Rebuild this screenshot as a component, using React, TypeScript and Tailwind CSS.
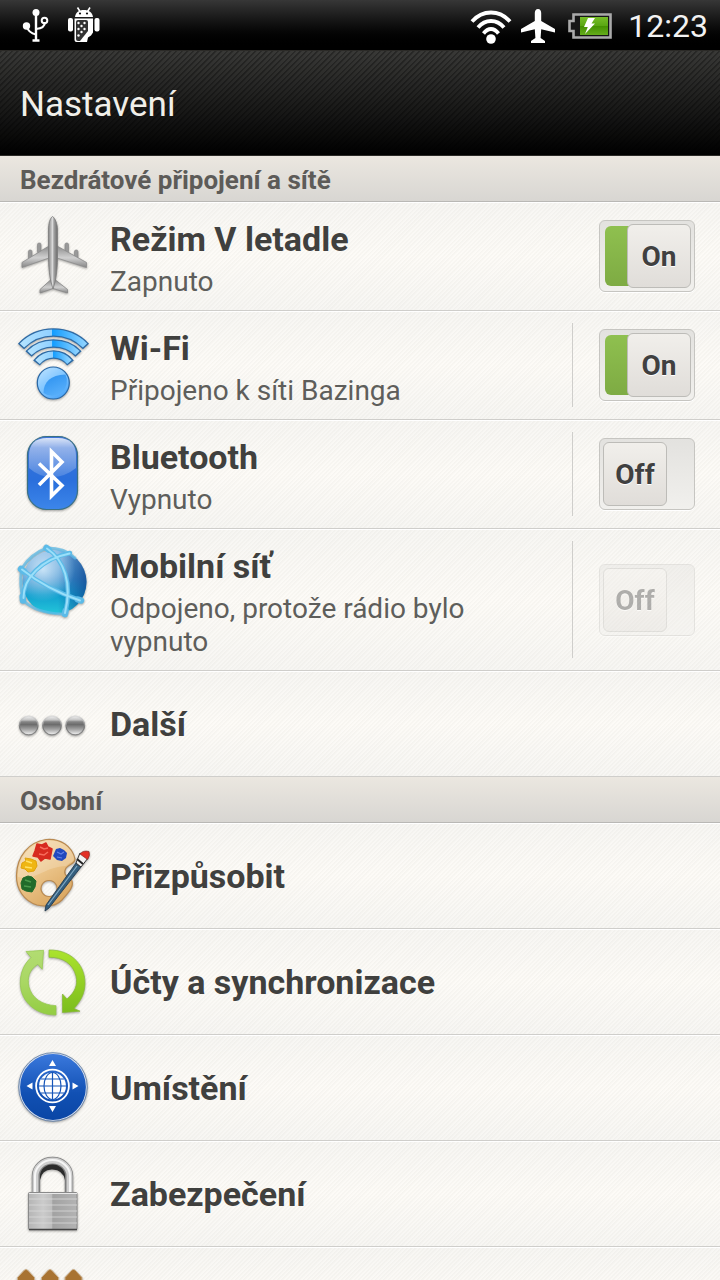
import { useState } from 'react';
import type { ReactNode } from 'react';
import { clsx } from 'clsx';

/* ---------- status bar icons ---------- */

function UsbIcon() {
  return (
    <svg viewBox="0 0 28 34" className="h-[34px] w-7" fill="none" stroke="#fff" strokeWidth="2">
      <path d="M14 5v27M10.500 32.500h7" strokeWidth="2.400" />
      <path d="M5 19c1 4 5 6.500 9 7.500M14 21c6-.5 9-2.500 9-7" />
      <circle cx="14" cy="4.500" r="3.500" fill="#fff" stroke="none" />
      <circle cx="4.500" cy="18" r="3.700" fill="#fff" stroke="none" />
      <circle cx="22.500" cy="12.500" r="2.800" />
    </svg>
  );
}

function AndroidIcon() {
  return (
    <svg viewBox="0 0 32 36" className="h-9 w-8">
      <path d="M7 10C7.500 5.500 11 3 15.800 3S24.500 5.500 25 10z" fill="#fff" />
      <path d="M9.500 .5l2.500 4M22 .5l-2.500 4" stroke="#fff" strokeWidth="1.600" />
      <circle cx="12" cy="6.500" r="1.100" fill="#111" />
      <circle cx="19" cy="6.500" r="1.100" fill="#111" />
      <rect x="0" y="11" width="5" height="13.500" rx="2" fill="#fff" />
      <rect x="26.500" y="11" width="5" height="13.500" rx="2" fill="#fff" />
      <path d="M6.500 11.500H25v14l-2 3-3 2-1 4.500H8.500a2 2 0 0 1-2-2z" fill="#fff" />
      <path d="M8 15q0-2 2-2h8q2 0 2 2v9l-8 10H10q-2 0-2-2z" fill="#333" />
      <g fill="#fff">
        <circle cx="10.500" cy="16" r="1.200" /><circle cx="16.500" cy="16" r="1.200" />
        <circle cx="13.500" cy="19" r="1.200" /><circle cx="10.500" cy="22" r="1.200" />
        <circle cx="16.500" cy="22" r="1.200" /><circle cx="13.500" cy="25" r="1.200" />
        <circle cx="10.500" cy="28.500" r="1.200" />
      </g>
    </svg>
  );
}

function SignalIcon() {
  return (
    <svg viewBox="0 0 42 36" className="h-9 w-[42px]" fill="none" stroke="#fff" strokeWidth="3.800">
      <path d="M2 13.500Q10 4.500 21 4.500T40 13.500" />
      <path d="M8 19.500Q13.500 13 21 13T34 19.500" />
      <path d="M13.500 25.500Q17 21 21 21t7.500 4.500" />
      <circle cx="21" cy="31" r="4.800" fill="#fff" stroke="none" />
    </svg>
  );
}

function FlightIcon() {
  return (
    <svg viewBox="0 0 36 34" className="h-[34px] w-9" fill="#fff">
      <path d="M18 0c2.200 0 3.200 1.800 3.200 4v8L35 20v3.500l-13.800-3.200-.6 8.700 4.400 3v2H11v-2l4.400-3-.6-8.700L1 23.500V20l13.800-8V4c0-2.200 1-4 3.200-4z" />
    </svg>
  );
}

function BatteryIcon() {
  return (
    <svg viewBox="0 0 44 28" className="h-7 w-11">
      <defs>
        <linearGradient id="batt" x2="0" y2="1">
          <stop offset="0" stopColor="#76bd27" /><stop offset=".5" stopColor="#59a612" />
          <stop offset=".5" stopColor="#439000" /><stop offset="1" stopColor="#65ad1b" />
        </linearGradient>
      </defs>
      <path d="M5.500 2.500h37v23h-37v-6.500h-4v-10h4z" fill="#161616" stroke="#aaa" strokeWidth="2.600" />
      <rect x="12" y="5" width="28" height="18" fill="url(#batt)" />
      <path d="M20 6h7l-3.500 5.500H27L17 22l2.800-7H16z" fill="#fff" />
    </svg>
  );
}

/* ---------- list icons, all on an 80x80 grid ---------- */

function Icon({ children }: { children: ReactNode }) {
  return (
    <svg viewBox="0 0 80 80" className="h-20 w-20 shrink-0 drop-shadow-[0_1px_1px_rgba(0,0,0,0.35)]" aria-hidden="true">
      {children}
    </svg>
  );
}

function AirplaneIcon() {
  return (
    <Icon>
      <defs>
        <linearGradient id="wing" x2="0" y2="1">
          <stop offset="0" stopColor="#8b8b8b" /><stop offset=".55" stopColor="#d0d0d0" /><stop offset="1" stopColor="#858585" />
        </linearGradient>
        <linearGradient id="body">
          <stop offset="0" stopColor="#858585" /><stop offset=".45" stopColor="#dadada" />
          <stop offset=".6" stopColor="#a3a3a3" /><stop offset="1" stopColor="#6b6b6b" />
        </linearGradient>
      </defs>
      <g fill="#999" stroke="#858585" strokeWidth=".6">
        <rect x="16.500" y="34" width="3.500" height="10" rx="1.500" /><rect x="25.500" y="27" width="3.500" height="10" rx="1.500" />
        <rect x="53" y="27" width="3.500" height="10" rx="1.500" /><rect x="62.500" y="34" width="3.500" height="10" rx="1.500" />
      </g>
      <path d="M37 30L10 46.500v5L37 42zM45 30l29.500 16.500v5L45 42z" fill="url(#wing)" stroke="#8b8b8b" strokeWidth=".8" />
      <path d="M38.500 64L28 73.500v3.500l13-4.500 14.500 4.500v-3.500L43.500 64z" fill="url(#wing)" stroke="#888" strokeWidth=".8" />
      <path d="M40.500 .5C43 2 45.500 8 45.500 14v24c0 12-.8 20-2.500 28l-2 7-2-7c-1.700-8-2.500-16-2.500-28V14c0-6 1.500-12 4-13.500z" fill="url(#body)" stroke="#7c7c7c" strokeWidth=".8" />
    </Icon>
  );
}

function WifiIcon() {
  return (
    <Icon>
      <defs>
        <linearGradient id="wave">
          <stop offset="0" stopColor="#b3e2ff" /><stop offset=".47" stopColor="#8fd0ff" />
          <stop offset=".48" stopColor="#119cff" /><stop offset="1" stopColor="#8dd2ff" />
        </linearGradient>
        <linearGradient id="ball" x2=".7" y2="1">
          <stop offset="0" stopColor="#c3e5ff" /><stop offset=".5" stopColor="#86c8ff" /><stop offset="1" stopColor="#4ba6fa" />
        </linearGradient>
        <linearGradient id="ballShade" x1=".3" x2=".8" y2="1">
          <stop offset="0" stopColor="#2f93f0" /><stop offset="1" stopColor="#5cb2fc" />
        </linearGradient>
      </defs>
      <g fill="none" stroke="#2f6ba5" strokeWidth="8.400">
        <path d="M9 21.500Q22 7.500 41.500 7.500T74 21.500" />
        <path d="M16.500 29Q26 18.500 41.500 18.500T66.500 29" />
        <path d="M24.500 38Q31 29.500 41.500 29.500T58.500 38" />
      </g>
      <g fill="none" stroke="url(#wave)" strokeWidth="6">
        <path d="M10 20.500Q23 7.500 41.500 7.500T73 20.500" />
        <path d="M17.500 28Q27 18.500 41.500 18.500T65.500 28" />
        <path d="M25.500 37Q32 29.500 41.500 29.500T57.500 37" />
      </g>
      <circle cx="41.300" cy="58" r="16" fill="url(#ball)" stroke="#2867a6" strokeWidth="1.200" />
      <path d="M31.500 68c0-11 7-18 22-18.500a14.800 14.800 0 0 1-22 18.500z" fill="url(#ballShade)" />
    </Icon>
  );
}

function BluetoothIcon() {
  return (
    <Icon>
      <defs>
        <linearGradient id="bt" x2="0" y2="1">
          <stop offset="0" stopColor="#3f74d8" /><stop offset=".6" stopColor="#2a6fdc" /><stop offset="1" stopColor="#3c86ea" />
        </linearGradient>
        <linearGradient id="btGloss" x2="0" y2="1">
          <stop offset="0" stopColor="#fff" stopOpacity=".8" /><stop offset=".25" stopColor="#fff" stopOpacity=".45" /><stop offset="1" stopColor="#fff" stopOpacity=".15" />
        </linearGradient>
      </defs>
      <rect x="15.500" y="2.500" width="50" height="73" rx="19" fill="url(#bt)" stroke="#3a7184" strokeWidth="1.200" />
      <path d="M17 22Q17 4 35 4h11q18 0 18 18v12Q53 43 40 43T17 34z" fill="url(#btGloss)" />
      <path d="M27 29.500L50 51.500 39.500 62V17.500L50 28 27 51" fill="none" stroke="#fff" strokeWidth="3.600" />
    </Icon>
  );
}

function GlobeIcon() {
  return (
    <Icon>
      <defs>
        <linearGradient id="sea" x1=".4" x2=".4" y2="1">
          <stop offset="0" stopColor="#7fb2e0" /><stop offset=".45" stopColor="#3d8fce" />
          <stop offset=".7" stopColor="#129fcf" /><stop offset="1" stopColor="#24c6d9" />
        </linearGradient>
        <radialGradient id="seaShine" cx=".32" cy=".3" r=".5">
          <stop offset="0" stopColor="#e6f5ff" stopOpacity=".8" /><stop offset="1" stopColor="#e6f5ff" stopOpacity="0" />
        </radialGradient>
        <linearGradient id="seaEdge">
          <stop offset=".55" stopColor="#12529d" stopOpacity="0" /><stop offset="1" stopColor="#0c408b" stopOpacity=".7" />
        </linearGradient>
      </defs>
      <circle cx="42.500" cy="39" r="32" fill="url(#sea)" />
      <circle cx="42.500" cy="39" r="32" fill="url(#seaEdge)" />
      <circle cx="42.500" cy="39" r="32" fill="url(#seaShine)" />
      <g fill="none" stroke="#5cbbe8" strokeLinecap="round">
        <path d="M9.500 27q-2 15 1.500 29M12 58q12 12 38 13M35 5q-16 6-25 20M35 5q18 0 28 10" strokeWidth="3" opacity=".75" />
        <path d="M9 26q25 20 60 31.500M34.500 5C52 17 61 40 53 71M11 57.500c-1-22 19-42 47-47.500" strokeWidth="4.400" />
        <path d="M9 26l3 2.500M34.500 5l2 1.500M53 71l.5-3M11 57.500l-.3-4M69 57.500l-3-1" strokeWidth="6.500" />
      </g>
      <g fill="none" stroke="#9adff9" strokeWidth="2" strokeLinecap="round">
        <path d="M10 26.500q25 20 58 31M35 5.500C52 17 60.500 40 53 70M11.500 55c-.5-20 19-39 46-44.500" />
      </g>
    </Icon>
  );
}

function MoreIcon() {
  return (
    <Icon>
      <defs>
        <linearGradient id="dot" x2="0" y2="1">
          <stop offset="0" stopColor="#efefef" /><stop offset=".2" stopColor="#c4c4c4" /><stop offset=".3" stopColor="#858585" />
          <stop offset=".45" stopColor="#6c6c6c" /><stop offset=".7" stopColor="#a2a2a2" /><stop offset="1" stopColor="#f4f4f4" />
        </linearGradient>
        <linearGradient id="dotRim" x2="0" y2="1">
          <stop offset="0" stopColor="#ddd" /><stop offset=".6" stopColor="#777" /><stop offset="1" stopColor="#888" />
        </linearGradient>
      </defs>
      {[16.7, 40, 63.3].map((cx) => (
        <circle key={cx} cx={cx} cy="41.500" r="9.300" fill="url(#dot)" stroke="url(#dotRim)" strokeWidth="1.200" />
      ))}
    </Icon>
  );
}

function PaletteIcon() {
  return (
    <Icon>
      <defs>
        <linearGradient id="wood" x2=".6" y2="1">
          <stop offset="0" stopColor="#f5dcb2" /><stop offset=".5" stopColor="#edc78d" /><stop offset="1" stopColor="#dba862" />
        </linearGradient>
      </defs>
      <path
        fillRule="evenodd"
        d="M34 3.500C48 2 60 10 63 23c0 5-6 5-9 9-4 7 2 9 6 13 2 6-4 12-10 19-6 6-16 7-25 5C12 65 4 53 4.500 39 5 20 17 6 34 3.500zM37 44.500a8 8 0 1 0 .1 0z"
        fill="url(#wood)" stroke="#b98950" strokeWidth="1.200"
      />
      <path d="M6 41C24 45 32 31 54 30c4-4 8-4 8-9C58 10 48 3 34 5 17 8 6 22 6 41z" fill="#fff" opacity=".2" />
      <path d="M25 8l5 1 4-2 2 4 4 2-1 5-1 5-5-1-4 3-3-4-5-1 2-5z" fill="#d72a1f" stroke="#d72a1f" strokeWidth="1.500" strokeLinejoin="round" />
      <path d="M28 11l4 2 4-1M27 18l5 1 4-3" stroke="#f76d5d" strokeWidth="1.500" fill="none" />
      <path d="M44 13l4-1 4 2 3 3-1 5-4 3-5-1-4-4z" fill="#2149be" />
      <path d="M45 16l4 2 3-2M45 21l5 1" stroke="#6382e8" strokeWidth="1.200" fill="none" />
      <path d="M13 22l6 1 5 2 1 5-3 5-6 1-3-3-4-1 1-5 4-2z" fill="#efb612" stroke="#e0a30c" strokeWidth="1" strokeLinejoin="round" />
      <path d="M14 25l6 2M13 31l7 1" stroke="#ffe167" strokeWidth="1.500" fill="none" />
      <path d="M11 42l5-2 4 1 4 4-1 6-3 5-6-1-4-2-1-6z" fill="#216b2a" stroke="#216b2a" strokeWidth="1" strokeLinejoin="round" />
      <path d="M13 44l6 2M12 50l7 1" stroke="#4b9b4d" strokeWidth="1.400" fill="none" />
      <path d="M33 75l1-6 30-42 5 4-32 41z" fill="#345e7d" stroke="#1c344b" strokeWidth=".8" />
      <path d="M36 69l29-39" stroke="#83abc6" strokeWidth="1.200" />
      <path d="M64 27l4-10 8 5-7 9z" fill="#f3f3f3" stroke="#333" strokeWidth="1" />
      <path d="M65 23l6 5" stroke="#222" strokeWidth="2" />
      <path d="M68 18q3-4 9-2.500 1.500 4-1.500 8z" fill="#e42f25" stroke="#8b2b27" strokeWidth=".7" />
    </Icon>
  );
}

function SyncIcon() {
  return (
    <Icon>
      <defs>
        <linearGradient id="sync1" x2="0" y2="1">
          <stop offset="0" stopColor="#b2dc72" /><stop offset=".5" stopColor="#a9d763" /><stop offset="1" stopColor="#93cd42" />
        </linearGradient>
        <linearGradient id="sync2" x2="0" y2="1">
          <stop offset="0" stopColor="#abe32d" /><stop offset="1" stopColor="#7cbd1d" />
        </linearGradient>
      </defs>
      <path d="M14 9.500l17.500-1.200-1.300 19-4.400-5C17 28 15 36 17 45c3 11 13 18 27 18.700V73C24 73 9 60 8.300 42 8 31 12 22 19 15.500z" fill="url(#sync1)" stroke="#93c84c" strokeWidth=".7" />
      <path d="M37 8c20-.5 36 13 36 33 0 11-5 19-11 25.500l6 2.700-17.500 1.300V52l4.500 5c8-7 11-14 9-23-3-12-13-19-27-18.700z" fill="url(#sync2)" stroke="#86b937" strokeWidth=".7" />
    </Icon>
  );
}

function LocationIcon() {
  return (
    <Icon>
      <defs>
        <linearGradient id="loc" x2="0" y2="1">
          <stop offset="0" stopColor="#3b79dd" /><stop offset=".6" stopColor="#1150b3" /><stop offset="1" stopColor="#0a46a5" />
        </linearGradient>
      </defs>
      <circle cx="41" cy="39" r="33.500" fill="url(#loc)" stroke="#d4dded" strokeWidth="1.200" />
      <circle cx="41" cy="39" r="34.300" fill="none" stroke="#5878a5" strokeWidth=".8" />
      <circle cx="40.500" cy="38" r="16.400" fill="none" stroke="#fff" strokeWidth="1.800" />
      <circle cx="40.500" cy="38" r="13.500" fill="#fff" />
      <g fill="none" stroke="#1555b8" strokeWidth="1.200">
        <path d="M40.500 24v28M27 38h27M29 31h23M29 45h23" />
        <ellipse cx="40.500" cy="38" rx="8.500" ry="13.500" />
      </g>
      <path d="M40.500 12l3.500 6h-7zM40.500 64l3.500-6h-7zM14.500 38l6-3.500v7zM66.500 38l-6-3.500v7z" fill="#fff" />
    </Icon>
  );
}

function LockIcon() {
  return (
    <Icon>
      <defs>
        <linearGradient id="lock">
          <stop offset="0" stopColor="#b5b5b5" /><stop offset=".3" stopColor="#cbcbcb" /><stop offset=".48" stopColor="#bdbdbd" />
          <stop offset=".5" stopColor="#a2a2a2" /><stop offset="1" stopColor="#b3b3b3" />
        </linearGradient>
      </defs>
      <path d="M24 39V22a16.500 15 0 0 1 33 0V39" fill="none" stroke="#7d7d7d" strokeWidth="8.400" />
      <path d="M23.500 39V22a17 15.500 0 0 1 34 0V39" fill="none" stroke="#cfcfcf" strokeWidth="6" />
      <path d="M23 39V22a17.500 16 0 0 1 35 0V39" fill="none" stroke="#f6f6f6" strokeWidth="2" />
      <path d="M28 26V22a12.500 11.500 0 0 1 25 0v4q-2-10-12.500-10.500T28 26z" fill="#2c2c2c" />
      <rect x="16.500" y="38.500" width="48.500" height="37" rx="1" fill="url(#lock)" stroke="#8a8a8a" />
      <path d="M17 45h48M17 51h48M17 57h48M17 63h48M17 69h48" stroke="#d9d9d9" strokeWidth=".8" />
      <path d="M17 75.500h48" stroke="#444" strokeWidth="1.400" />
      <path d="M17 39.500h48" stroke="#e8e8e8" strokeWidth="1" />
    </Icon>
  );
}

function AppsIcon() {
  return (
    <Icon>
      {[14, 38, 61.5].map((x) => (
        <path key={x} transform={`translate(${x} 9.500)`} d="M0 0q1.500 0 2.500 1.500l6 6.500v20h-17V8l6-6.500q1-1.500 2.500-1.500z" fill="#a87332" stroke="#cdb08a" strokeWidth="1" />
      ))}
    </Icon>
  );
}

/* ---------- controls ---------- */

interface SwitchProps {
  label: string;
  on: boolean;
  disabled?: boolean;
  onChange: (next: boolean) => void;
}

function Switch({ label, on, disabled, onChange }: SwitchProps) {
  return (
    <label
      className={clsx(
        'relative flex h-[72px] w-24 shrink-0 items-center rounded-md border border-[#c6c5c1] bg-gradient-to-b from-[#e3e2df] to-[#f1f0ed] p-[3px] shadow-[0_1px_0_#fff]',
        on ? 'justify-end' : 'justify-start',
        disabled ? 'opacity-40' : 'cursor-pointer',
      )}
    >
      <input
        type="checkbox"
        role="switch"
        aria-label={label}
        checked={on}
        disabled={disabled}
        onChange={(e) => onChange(e.target.checked)}
        className="sr-only"
      />
      {on && <span className="-mr-1 h-[60px] w-[26px] shrink-0 rounded-l-md bg-gradient-to-b from-[#8fc04f] to-[#7eab43]" />}
      <span className="relative flex h-16 w-16 shrink-0 items-center justify-center rounded-md border border-[#bdbcb8] bg-gradient-to-b from-[#f1efeb] to-[#e0ddd9] pt-[2px] text-[28px] font-bold text-[#404040] [text-shadow:0_1px_0_#fff]">
        {on ? 'On' : 'Off'}
      </span>
    </label>
  );
}

function SectionHeader({ children }: { children: ReactNode }) {
  return (
    <h2 className="flex h-[46px] items-center border-b border-[#b9b8b5] bg-gradient-to-b from-[#ebe7e0] to-[#d8d6d2] px-5 pt-[2px] text-[26px] leading-8 font-bold text-[#5d5b58]">
      {children}
    </h2>
  );
}

interface RowProps {
  icon: ReactNode;
  title?: string;
  summary?: string;
  divider?: boolean;
  control?: ReactNode;
}

function Row({ icon, title, summary, divider, control }: RowProps) {
  return (
    <li
      className={clsx(
        'flex items-stretch border-b border-[#cfcecb] bg-[repeating-linear-gradient(135deg,rgba(110,110,90,0.04)_0px,rgba(110,110,90,0.04)_1px,transparent_2px,transparent_3px),linear-gradient(#f7f6f3,#fdfbf7_50%,#f7f6f3)] shadow-[inset_0_1px_0_#fff]',
        summary ? 'min-h-[109px]' : 'min-h-[106px]',
      )}
    >
      <button type="button" className={clsx('flex flex-1 gap-[18px] pl-3 text-left', summary ? 'items-start pt-[14px] pb-3' : 'items-center')}>
        {icon}
        <span className="flex flex-col gap-[3px]">
          {title && <span className="text-[34px] leading-[46px] font-bold text-[#40403e]">{title}</span>}
          {summary && <span className="pr-4 text-[28px] leading-[33px] text-[#5e5e5b]">{summary}</span>}
        </span>
      </button>
      {control && (
        <div className={clsx('my-3 flex w-[148px] items-center justify-end pr-[25px]', divider && 'border-l border-[#cfcecb]')}>
          {control}
        </div>
      )}
    </li>
  );
}

export default function App() {
  const [airplane, setAirplane] = useState(true);
  const [wifi, setWifi] = useState(true);
  const [bluetooth, setBluetooth] = useState(false);

  return (
    <div className="flex h-screen flex-col overflow-hidden bg-[#f8f7f3] font-[Roboto,sans-serif]">
      <div className="flex h-[50px] shrink-0 items-center justify-between bg-gradient-to-b from-[#373737] to-black pr-3 pl-[22px] text-[#f2f2f2]">
        <div className="flex items-center gap-[18px]">
          <UsbIcon />
          <AndroidIcon />
        </div>
        <div className="flex items-center pt-[2px]">
          <SignalIcon />
          <span className="ml-2"><FlightIcon /></span>
          <span className="ml-3"><BatteryIcon /></span>
          <time className="ml-4 text-[32px] leading-10">12:23</time>
        </div>
      </div>

      <header className="flex h-[106px] shrink-0 items-center border-y border-[#2b2a27] bg-[repeating-linear-gradient(135deg,rgba(0,0,0,0.3)_0px,rgba(0,0,0,0.3)_1px,transparent_2px,transparent_4px),linear-gradient(#393937,#000)] px-5 pt-1">
        <h1 className="text-[35px] leading-10 text-[#f1efe9]">Nastavení</h1>
      </header>

      <main>
        <SectionHeader>Bezdrátové připojení a sítě</SectionHeader>
        <ul>
          <Row
            icon={<AirplaneIcon />}
            title="Režim V letadle"
            summary="Zapnuto"
            control={<Switch label="Režim V letadle" on={airplane} onChange={setAirplane} />}
          />
          <Row
            icon={<WifiIcon />}
            title="Wi-Fi"
            summary="Připojeno k síti Bazinga"
            divider
            control={<Switch label="Wi-Fi" on={wifi} onChange={setWifi} />}
          />
          <Row
            icon={<BluetoothIcon />}
            title="Bluetooth"
            summary="Vypnuto"
            divider
            control={<Switch label="Bluetooth" on={bluetooth} onChange={setBluetooth} />}
          />
          <Row
            icon={<GlobeIcon />}
            title="Mobilní síť"
            summary="Odpojeno, protože rádio bylo vypnuto"
            divider
            control={<Switch label="Mobilní síť" on={false} disabled onChange={() => {}} />}
          />
          <Row icon={<MoreIcon />} title="Další" />
        </ul>

        <SectionHeader>Osobní</SectionHeader>
        <ul>
          <Row icon={<PaletteIcon />} title="Přizpůsobit" />
          <Row icon={<SyncIcon />} title="Účty a synchronizace" />
          <Row icon={<LocationIcon />} title="Umístění" />
          <Row icon={<LockIcon />} title="Zabezpečení" />
          <Row icon={<AppsIcon />} />
        </ul>
      </main>
    </div>
  );
}
